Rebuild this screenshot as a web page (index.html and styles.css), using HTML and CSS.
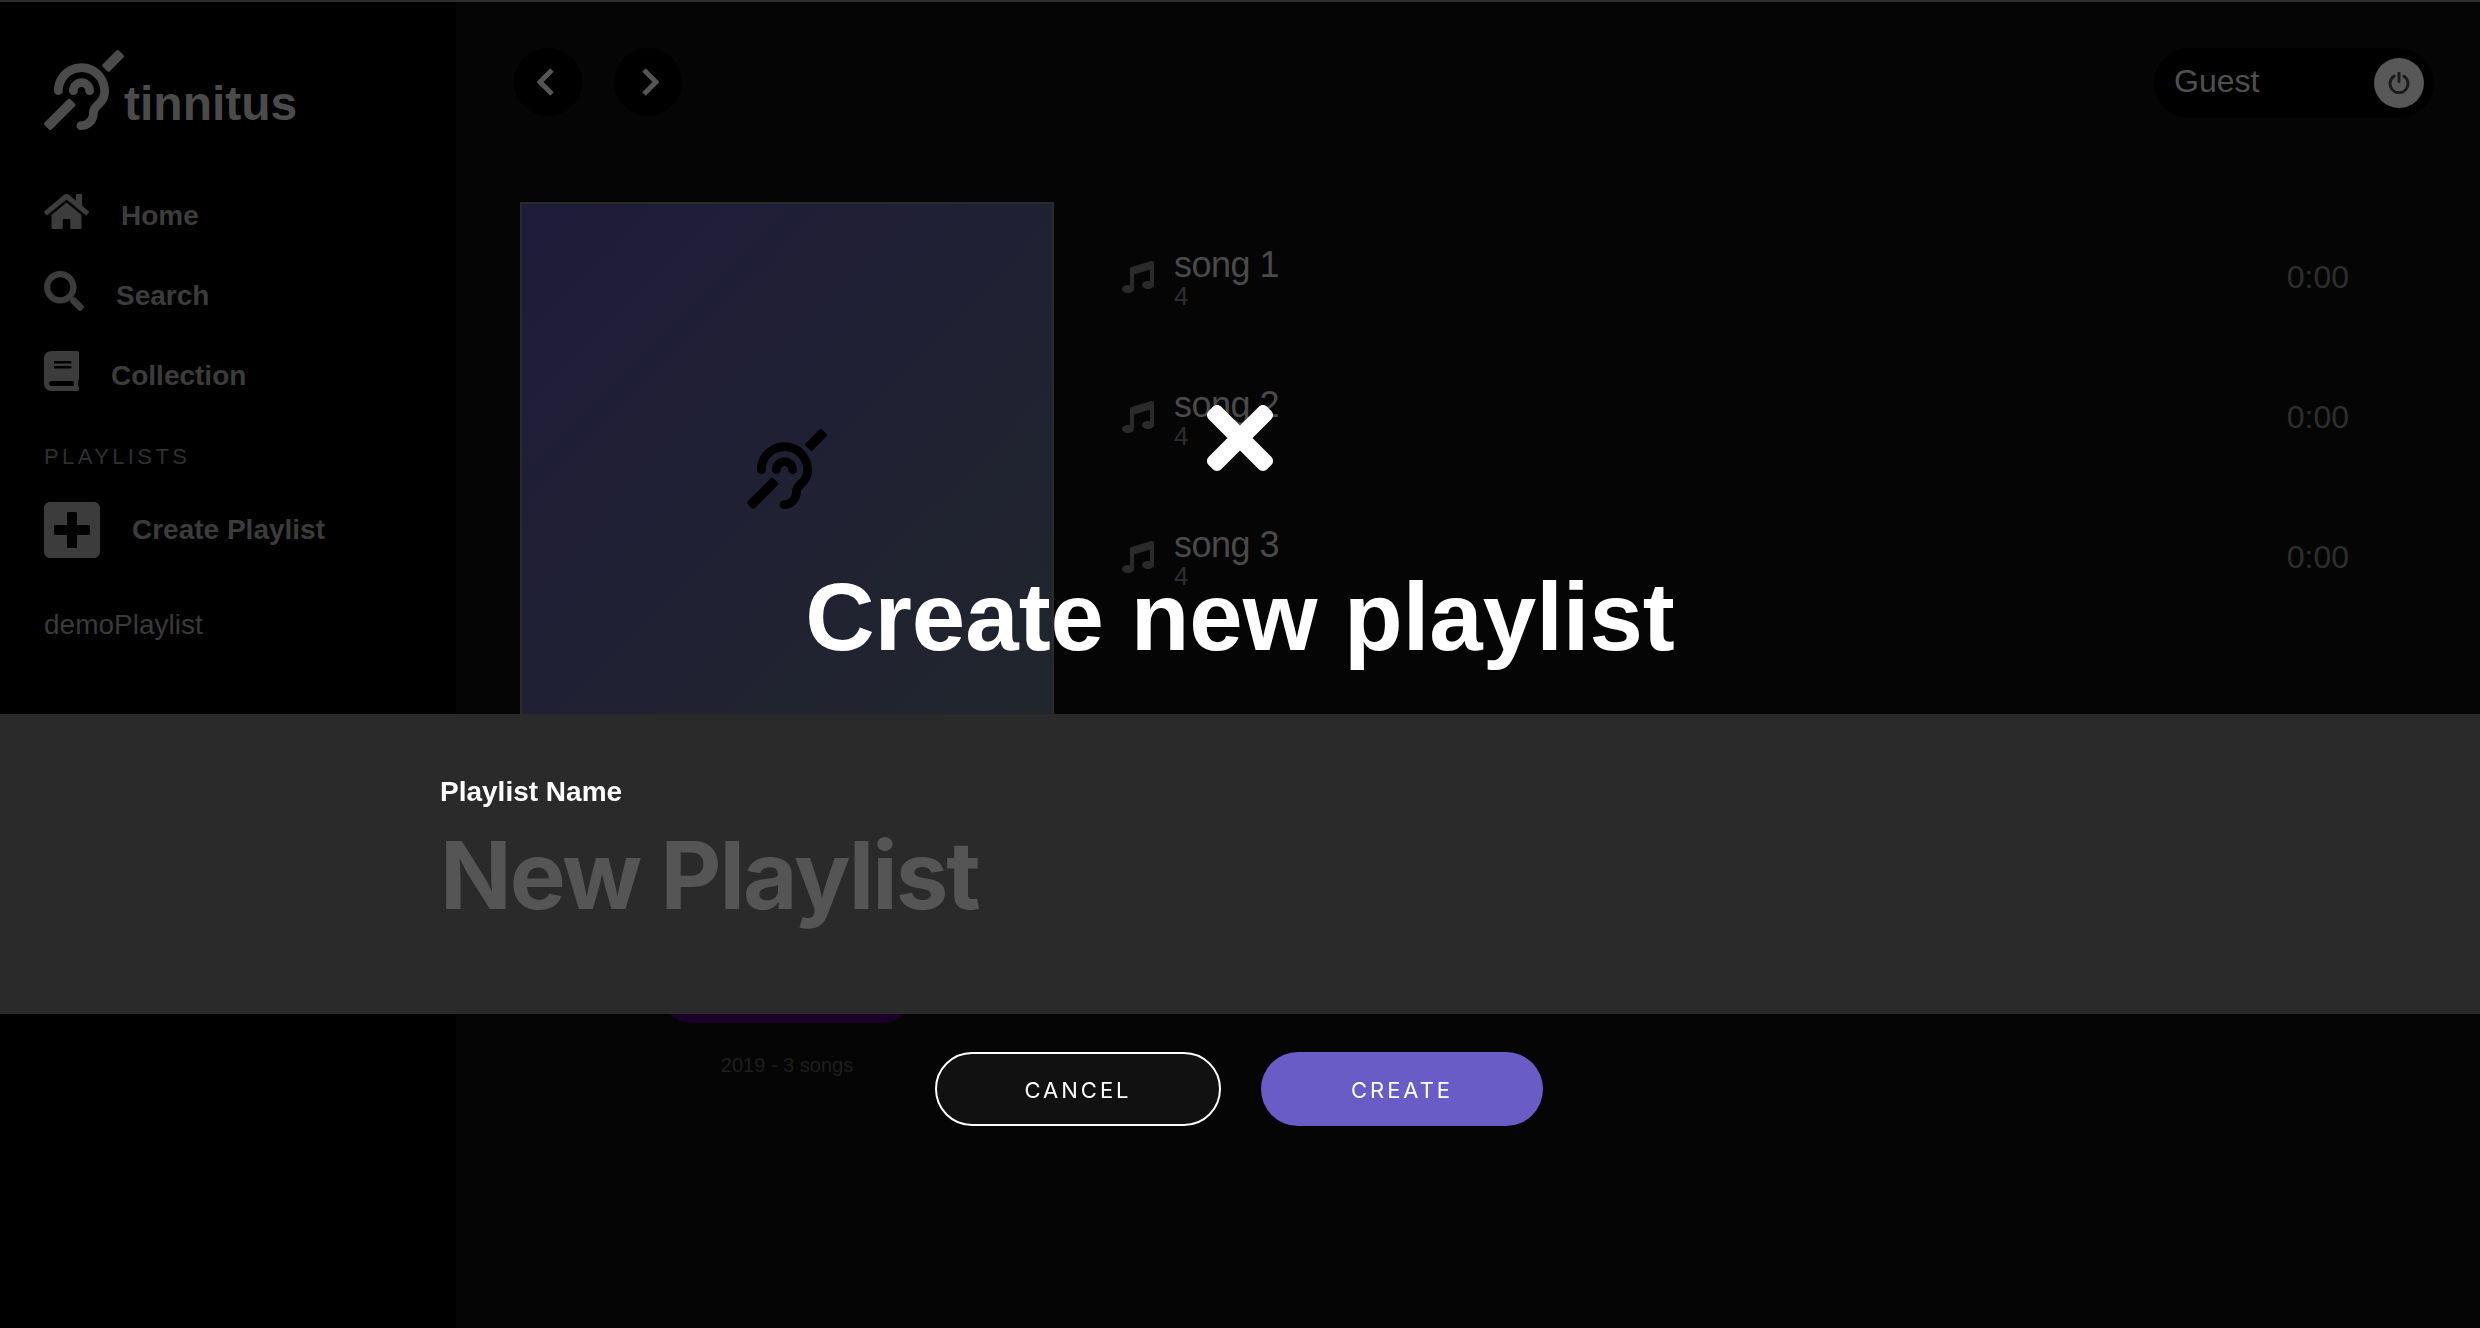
FILE: index.html
```html
<!DOCTYPE html>
<html lang="en">
<head>
    <meta charset="UTF-8">
    <meta name="viewport" content="width=device-width, initial-scale=1.0">
    <title>tinnitus</title>
    <link rel="stylesheet" href="styles.css">
</head>
<body>
    <svg class="defs" aria-hidden="true">
        <symbol id="ear" viewBox="0 0 512 512"><path d="M216 260c0 15.464-12.536 28-28 28s-28-12.536-28-28c0-44.112 35.888-80 80-80s80 35.888 80 80c0 15.464-12.536 28-28 28s-28-12.536-28-28c0-13.234-10.767-24-24-24s-24 10.766-24 24zm24-176c-97.047 0-176 78.953-176 176 0 15.464 12.536 28 28 28s28-12.536 28-28c0-66.168 53.832-120 120-120s120 53.832 120 120c0 75.164-71.009 70.311-71.997 143.622L288 404c0 28.673-23.327 52-52 52-15.464 0-28 12.536-28 28s12.536 28 28 28c59.475 0 107.876-48.328 108-107.774.595-34.428 72-48.24 72-144.226 0-97.047-78.953-176-176-176zm268.485-52.201L480.2 3.515c-4.687-4.686-12.284-4.686-16.971 0L376.2 90.544c-4.686 4.686-4.686 12.284 0 16.971l28.285 28.285c4.686 4.686 12.284 4.686 16.97 0l87.03-87.029c4.687-4.687 4.687-12.285 0-16.972zM168.97 314.745c-4.686-4.686-12.284-4.686-16.97 0L3.515 463.23c-4.686 4.687-4.686 12.285 0 16.971L31.8 508.485c4.687 4.686 12.284 4.686 16.971 0L197.256 360c4.686-4.686 4.686-12.284 0-16.971l-28.286-28.284z"/></symbol>
        <symbol id="note" viewBox="0 0 512 512"><path d="M470.38 1.51L150.41 96A32 32 0 0 0 128 126.51v261.41A139 139 0 0 0 96 384c-53 0-96 28.66-96 64s43 64 96 64 96-28.66 96-64V214.32l256-75v184.61a138.4 138.4 0 0 0-32-3.93c-53 0-96 28.66-96 64s43 64 96 64 96-28.65 96-64V32a32 32 0 0 0-41.62-30.49z"/></symbol>
    </svg>

    <div class="app">
        <aside class="sidebar">
            <div class="logo">
                <svg class="logo-icon"><use href="#ear"/></svg>
                <span class="logo-text">tinnitus</span>
            </div>
            <nav class="nav">
                <a class="nav-item">
                    <svg class="nav-icon icon-home" viewBox="0 32 576 448"><path d="M280.37 148.26L96 300.11V464a16 16 0 0 0 16 16l112.06-.29a16 16 0 0 0 15.92-16V368a16 16 0 0 1 16-16h64a16 16 0 0 1 16 16v95.64a16 16 0 0 0 16 16.05L464 480a16 16 0 0 0 16-16V300L295.67 148.26a12.19 12.19 0 0 0-15.3 0zM571.6 251.47L488 182.56V44.05a12 12 0 0 0-12-12h-56a12 12 0 0 0-12 12v72.61L318.47 43a48 48 0 0 0-61 0L4.34 251.47a12 12 0 0 0-1.6 16.9l25.5 31A12 12 0 0 0 45.15 301l235.22-193.74a12.19 12.19 0 0 1 15.3 0L530.9 301a12 12 0 0 0 16.9-1.6l25.5-31a12 12 0 0 0-1.7-16.93z"/></svg>
                    <span>Home</span>
                </a>
                <a class="nav-item">
                    <svg class="nav-icon icon-search" viewBox="0 0 512 512"><path d="M505 442.7L405.3 343c-4.5-4.5-10.6-7-17-7H372c27.6-35.3 44-79.7 44-128C416 93.1 322.9 0 208 0S0 93.1 0 208s93.1 208 208 208c48.3 0 92.7-16.4 128-44v16.3c0 6.4 2.5 12.5 7 17l99.7 99.7c9.4 9.4 24.6 9.4 33.9 0l28.3-28.3c9.4-9.4 9.4-24.6.1-34zM208 336c-70.7 0-128-57.2-128-128 0-70.7 57.2-128 128-128 70.7 0 128 57.2 128 128 0 70.7-57.2 128-128 128z"/></svg>
                    <span>Search</span>
                </a>
                <a class="nav-item">
                    <svg class="nav-icon icon-book" viewBox="0 0 448 512"><path d="M448 360V24c0-13.3-10.7-24-24-24H96C43 0 0 43 0 96v320c0 53 43 96 96 96h328c13.3 0 24-10.7 24-24v-16c0-7.5-3.5-14.3-8.9-18.7-4.2-15.4-4.2-59.3 0-74.7 5.4-4.3 8.9-11.1 8.9-18.6zM128 134c0-3.3 2.7-6 6-6h212c3.3 0 6 2.7 6 6v20c0 3.3-2.7 6-6 6H134c-3.3 0-6-2.7-6-6v-20zm0 64c0-3.3 2.7-6 6-6h212c3.3 0 6 2.7 6 6v20c0 3.3-2.7 6-6 6H134c-3.3 0-6-2.7-6-6v-20zm253.4 250H96c-17.7 0-32-14.3-32-32 0-17.6 14.4-32 32-32h285.4c-1.9 17.1-1.9 46.9 0 64z"/></svg>
                    <span>Collection</span>
                </a>
            </nav>
            <div class="section-label">PLAYLISTS</div>
            <a class="create-row">
                <svg class="icon-plus" viewBox="0 32 448 448"><path d="M400 32H48C21.5 32 0 53.5 0 80v352c0 26.5 21.5 48 48 48h352c26.5 0 48-21.5 48-48V80c0-26.5-21.5-48-48-48zm-32 252c0 6.6-5.4 12-12 12h-92v92c0 6.6-5.4 12-12 12h-56c-6.6 0-12-5.4-12-12v-92H92c-6.6 0-12-5.4-12-12v-56c0-6.6 5.4-12 12-12h92v-92c0-6.6 5.4-12 12-12h56c6.6 0 12 5.4 12 12v92h92c6.6 0 12 5.4 12 12v56z"/></svg>
                <span>Create Playlist</span>
            </a>
            <div class="playlist-link">demoPlaylist</div>
        </aside>

        <main class="main">
            <header class="topbar">
                <div class="history">
                    <button class="round-btn">
                        <svg class="chevron chevron-back" viewBox="0 0 17 28"><polyline points="15,2 3,14 15,26"/></svg>
                    </button>
                    <button class="round-btn">
                        <svg class="chevron chevron-next" viewBox="0 0 17 28"><polyline points="2,2 14,14 2,26"/></svg>
                    </button>
                </div>
                <div class="user-pill">
                    <span class="user-name">Guest</span>
                    <span class="power">
                        <svg class="power-icon" viewBox="0 0 22 22"><path d="M6 4.2a9 9 0 1 0 10 0"/><path d="M11 0.5v9"/></svg>
                    </span>
                </div>
            </header>

            <section class="playlist">
                <div class="cover-col">
                    <div class="cover">
                        <svg class="cover-icon"><use href="#ear"/></svg>
                    </div>
                    <div class="play-btn"></div>
                    <div class="cover-meta">2019 - 3 songs</div>
                </div>
                <div class="songs">
                    <div class="song">
                        <svg class="song-icon"><use href="#note"/></svg>
                        <div class="song-info">
                            <div class="song-name">song 1</div>
                            <div class="song-artist">4</div>
                        </div>
                        <div class="song-time">0:00</div>
                    </div>
                    <div class="song">
                        <svg class="song-icon"><use href="#note"/></svg>
                        <div class="song-info">
                            <div class="song-name">song 2</div>
                            <div class="song-artist">4</div>
                        </div>
                        <div class="song-time">0:00</div>
                    </div>
                    <div class="song">
                        <svg class="song-icon"><use href="#note"/></svg>
                        <div class="song-info">
                            <div class="song-name">song 3</div>
                            <div class="song-artist">4</div>
                        </div>
                        <div class="song-time">0:00</div>
                    </div>
                </div>
            </section>
        </main>
    </div>

    <div class="modal">
        <svg class="modal-close" viewBox="0 80 352 352"><path d="M242.72 256l100.07-100.07c12.28-12.28 12.28-32.19 0-44.48l-22.24-22.24c-12.28-12.28-32.19-12.28-44.48 0L176 189.28 75.93 89.21c-12.28-12.28-32.19-12.28-44.48 0L9.21 111.45c-12.28 12.28-12.28 32.19 0 44.48L109.28 256 9.21 356.07c-12.28 12.28-12.28 32.19 0 44.48l22.24 22.24c12.28 12.28 32.2 12.28 44.48 0L176 322.72l100.07 100.07c12.28 12.28 32.2 12.28 44.48 0l22.24-22.24c12.28-12.28 12.28-32.19 0-44.48L242.72 256z"/></svg>
        <h1 class="modal-title">Create new playlist</h1>
        <div class="modal-band">
            <label class="modal-label" for="playlistName">Playlist Name</label>
            <input class="modal-input" type="text" id="playlistName" placeholder="New Playlist">
        </div>
        <div class="modal-actions">
            <button class="btn btn-cancel">CANCEL</button>
            <button class="btn btn-create">CREATE</button>
        </div>
    </div>
</body>
</html>
```

FILE: styles.css
```css
* {
    box-sizing: border-box;
}
html, body {
    margin: 0;
    padding: 0;
    height: 100%;
}
body {
    font-family: "Liberation Sans", Arial, sans-serif;
    background: #000;
    overflow: hidden;
}
.defs {
    display: none;
}
.app {
    display: flex;
    height: 100vh;
    border-top: 2px solid #2e2e2e;
}

/* sidebar */
.sidebar {
    width: 456px;
    flex-shrink: 0;
    background: #000;
    padding: 48px 0 0 44px;
}
.logo {
    display: flex;
    align-items: flex-end;
    height: 80px;
}
.logo-icon {
    width: 80px;
    height: 80px;
    fill: #4b4b4b;
}
.logo-text {
    font-size: 48px;
    font-weight: 700;
    line-height: 56px;
    color: #4b4b4b;
    margin-bottom: -2px;
}
.nav {
    margin-top: 46px;
}
.nav-item, .create-row {
    display: flex;
    align-items: center;
    gap: 32px;
    font-size: 28px;
    font-weight: 700;
    color: #3c3c3c;
}
.nav-item {
    height: 80px;
}
.nav-icon {
    fill: #3c3c3c;
    margin-bottom: 10px;
}
.icon-home {
    width: 45px;
    height: 35px;
}
.icon-search {
    width: 40px;
    height: 40px;
}
.icon-book {
    width: 35px;
    height: 40px;
}
.section-label {
    margin-top: 26px;
    font-size: 22px;
    line-height: 30px;
    letter-spacing: 3.4px;
    color: #303030;
}
.create-row {
    margin-top: 30px;
}
.icon-plus {
    width: 56px;
    height: 56px;
    fill: #3c3c3c;
}
.playlist-link {
    margin-top: 51px;
    font-size: 28px;
    line-height: 32px;
    color: #3a3a3a;
}

/* main */
.main {
    flex: 1;
    background: #050505;
    padding: 46px 46px 0 58px;
}
.topbar {
    display: flex;
    justify-content: space-between;
    align-items: flex-start;
}
.history {
    display: flex;
    gap: 32px;
}
.round-btn {
    width: 68px;
    height: 68px;
    border: 0;
    padding: 0;
    border-radius: 50%;
    background: #000;
    display: flex;
    align-items: center;
    justify-content: center;
}
.chevron {
    width: 17px;
    height: 28px;
    fill: none;
    stroke: #555;
    stroke-width: 5;
}
.chevron-back {
    margin-right: 5px;
}
.chevron-next {
    margin-left: 5px;
}
.user-pill {
    width: 280px;
    height: 70px;
    border-radius: 35px;
    background: #000;
    padding: 0 10px 0 20px;
    display: flex;
    align-items: center;
    justify-content: space-between;
    font-size: 32px;
    color: #505050;
}
.user-name {
    margin-bottom: 3px;
}
.power {
    width: 50px;
    height: 50px;
    border-radius: 50%;
    background: #585858;
    display: flex;
    align-items: center;
    justify-content: center;
}
.power-icon {
    width: 22px;
    height: 22px;
    fill: none;
    stroke: #1c1c1c;
    stroke-width: 3;
    stroke-linecap: round;
}
.playlist {
    display: flex;
    gap: 68px;
    margin: 84px 85px 0 6px;
}
.cover-col {
    width: 534px;
    flex-shrink: 0;
    display: flex;
    flex-direction: column;
    align-items: center;
}
.cover {
    width: 534px;
    height: 534px;
    border: 2px solid #2a2a2a;
    background: linear-gradient(135deg, #1f1b3b, #21262c);
    display: flex;
    align-items: center;
    justify-content: center;
}
.cover-icon {
    width: 80px;
    height: 80px;
    fill: #000;
}
.play-btn {
    width: 254px;
    height: 64px;
    margin-top: 223px;
    border-radius: 32px;
    background: #1a0028;
}
.cover-meta {
    margin-top: 30px;
    font-size: 20px;
    line-height: 24px;
    color: #1f1f1f;
}
.songs {
    flex: 1;
    padding-top: 5px;
}
.song {
    height: 140px;
    display: flex;
    align-items: center;
    gap: 20px;
}
.song-icon {
    width: 32px;
    height: 32px;
    fill: #2a2a2a;
}
.song-info {
    flex: 1;
    padding-top: 1px;
}
.song-name {
    font-size: 36px;
    line-height: 38px;
    letter-spacing: -0.5px;
    color: #4a4a4a;
}
.song-artist {
    margin-top: -1px;
    font-size: 26px;
    line-height: 26px;
    color: #2e2e2e;
}
.song-time {
    font-size: 32px;
    color: #2e2e2e;
}

/* modal */
.modal {
    position: fixed;
    top: 0;
    left: 0;
    right: 0;
    bottom: 0;
    padding-top: 405px;
    display: flex;
    flex-direction: column;
    align-items: center;
}
.modal-close {
    width: 66px;
    height: 66px;
    fill: #fff;
}
.modal-title {
    margin: 91px 0 0;
    font-size: 96px;
    font-weight: 700;
    line-height: 110px;
    color: #fff;
}
.modal-band {
    width: 100%;
    height: 300px;
    margin-top: 42px;
    padding: 61px 0 0 440px;
    background: #2a2a2a;
}
.modal-label {
    display: block;
    font-size: 28px;
    font-weight: 700;
    line-height: 34px;
    color: #fff;
}
.modal-input {
    display: block;
    width: 1600px;
    height: 110px;
    margin-top: 11px;
    padding: 0;
    border: 0;
    outline: 0;
    background: transparent;
    font-family: Inter, "Liberation Sans", sans-serif;
    font-size: 94px;
    font-weight: 700;
    letter-spacing: -2px;
    color: #fff;
}
.modal-input::placeholder {
    color: #555;
    opacity: 1;
}
.modal-actions {
    display: flex;
    gap: 40px;
    margin-top: 38px;
    margin-right: 2px;
}
.btn {
    height: 74px;
    border-radius: 37px;
    font-family: Inter, "Liberation Sans", sans-serif;
    font-size: 22px;
    letter-spacing: 3px;
    color: #fff;
    padding: 2px 0 0;
}
.btn-cancel {
    width: 286px;
    background: #111;
    border: 2px solid #fff;
}
.btn-create {
    width: 282px;
    background: #695cc7;
    border: 0;
}
```
